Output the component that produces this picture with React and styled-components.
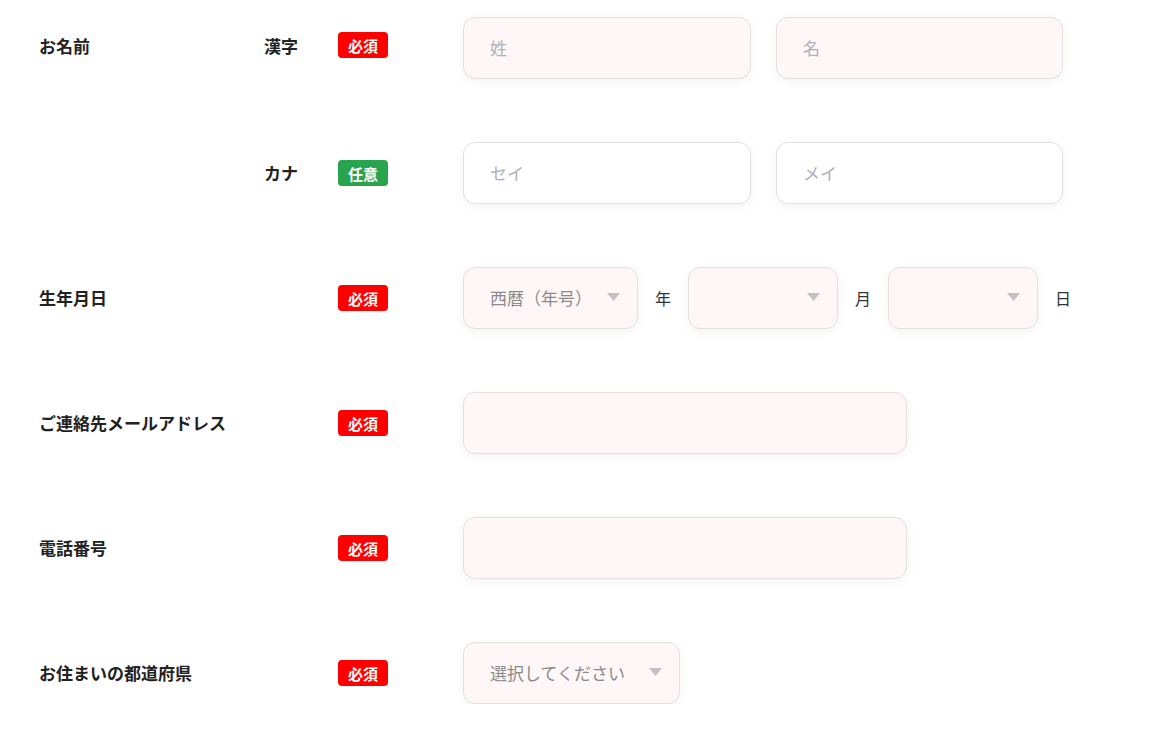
import React from "react";
import styled, { createGlobalStyle } from "styled-components";

const Global = createGlobalStyle`
  html, body { margin: 0; padding: 0; background: #fff; }
  body { font-family: "Noto Sans CJK JP", "Noto Sans", sans-serif; color: #222; }
`;

const Form = styled.div`
  display: flex;
  flex-direction: column;
  gap: 63px;
  padding: 17px 0 0 39px;
`;

const Row = styled.div`
  display: flex;
  align-items: center;
  height: 62px;
`;

const Label = styled.div`
  width: 225px;
  font-size: 17px;
  font-weight: 700;
  color: #222;
  margin-top: ${(p) => p.$shift || -1}px;
`;

const SubLabel = styled.div`
  width: 74px;
  font-size: 17px;
  font-weight: 700;
  color: #222;
  margin-top: ${(p) => p.$shift || -1}px;
`;

const Badge = styled.span`
  width: 50px;
  height: 26px;
  border-radius: 4px;
  background: ${(p) => (p.$optional ? "#28a44f" : "#ff0000")};
  color: #fff;
  font-size: 15px;
  font-weight: 700;
  display: flex;
  align-items: center;
  justify-content: center;
  margin-right: 75px;
  margin-top: ${(p) => p.$shift || 0}px;
`;

const Fields = styled.div`
  display: flex;
  align-items: center;
  gap: ${(p) => p.$gap || 25}px;
`;

const Box = styled.div`
  box-sizing: border-box;
  width: ${(p) => p.$w}px;
  height: 62px;
  border: 1px solid #e2dfdf;
  border-radius: 12px;
  background: ${(p) => (p.$white ? "#fff" : "#fff7f7")};
  box-shadow: 0 3px 12px rgba(0, 0, 0, 0.05);
  display: flex;
  align-items: center;
  justify-content: space-between;
  padding: 0 17px 2px 26px;
  font-size: 17px;
`;

const Placeholder = styled.span`
  color: #aeb0ba;
`;

const SelectText = styled.span`
  color: #8a8a8a;
`;

const Unit = styled.span`
  font-size: 16px;
  color: #333;
  margin-left: ${(p) => p.$ml || 0}px;
`;

const Arrow = () => (
  <svg width="13" height="8" viewBox="0 0 13 8" style={{ flex: "none" }}>
    <path d="M0 0H13L6.5 8Z" fill="#c2c2c2" />
  </svg>
);

export default function App() {
  return (
    <>
      <Global />
      <Form>
        <Row>
          <Label $shift={-6}>お名前</Label>
          <SubLabel $shift={-6}>漢字</SubLabel>
          <Badge $shift={-6}>必須</Badge>
          <Fields>
            <Box $w={288}><Placeholder>姓</Placeholder></Box>
            <Box $w={287}><Placeholder>名</Placeholder></Box>
          </Fields>
        </Row>
        <Row>
          <Label />
          <SubLabel>カナ</SubLabel>
          <Badge $optional>任意</Badge>
          <Fields>
            <Box $w={288} $white><Placeholder>セイ</Placeholder></Box>
            <Box $w={287} $white><Placeholder>メイ</Placeholder></Box>
          </Fields>
        </Row>
        <Row>
          <Label>生年月日</Label>
          <SubLabel />
          <Badge>必須</Badge>
          <Fields $gap={17}>
            <Box $w={175}><SelectText>西暦（年号）</SelectText><Arrow /></Box>
            <Unit>年</Unit>
            <Box $w={150}><span /><Arrow /></Box>
            <Unit>月</Unit>
            <Box $w={150}><span /><Arrow /></Box>
            <Unit>日</Unit>
          </Fields>
        </Row>
        <Row>
          <Label>ご連絡先メールアドレス</Label>
          <SubLabel />
          <Badge>必須</Badge>
          <Fields>
            <Box $w={444} />
          </Fields>
        </Row>
        <Row>
          <Label>電話番号</Label>
          <SubLabel />
          <Badge>必須</Badge>
          <Fields>
            <Box $w={444} />
          </Fields>
        </Row>
        <Row>
          <Label>お住まいの都道府県</Label>
          <SubLabel />
          <Badge>必須</Badge>
          <Fields>
            <Box $w={217}><SelectText>選択してください</SelectText><Arrow /></Box>
          </Fields>
        </Row>
      </Form>
    </>
  );
}
